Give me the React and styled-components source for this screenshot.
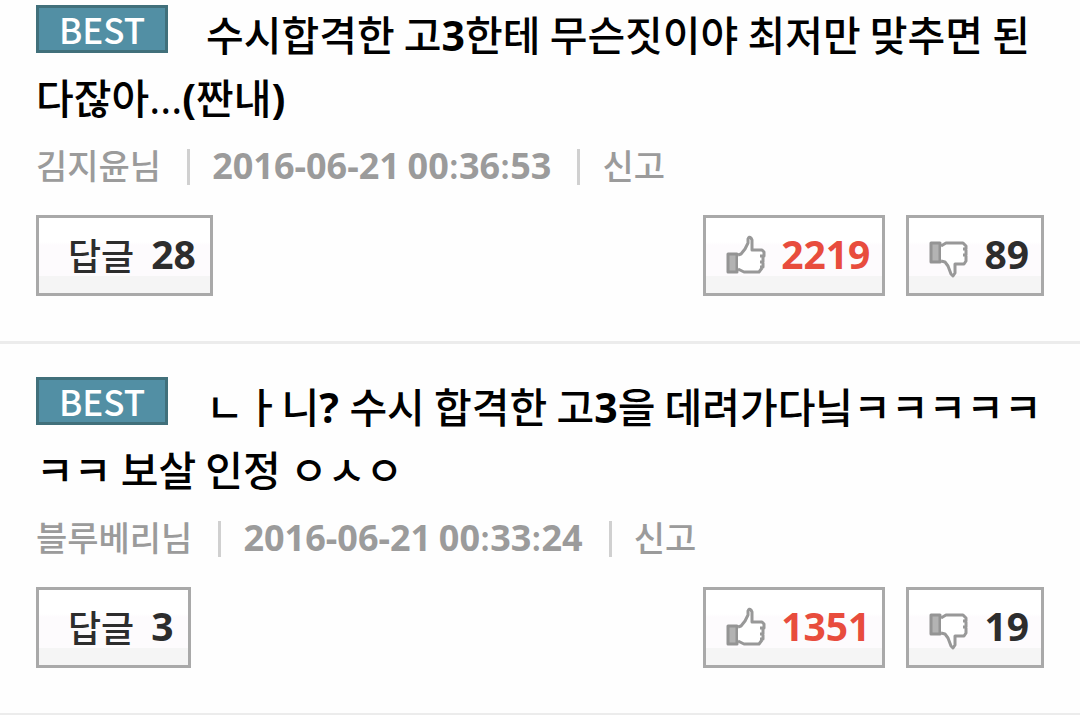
import React from 'react';
import styled, { createGlobalStyle } from 'styled-components';

const GlobalStyle = createGlobalStyle`
  body {
    margin: 0;
    background: #fefefe;
    overflow: hidden;
    font-family: "Noto Sans CJK KR", sans-serif;
    font-weight: 500;
  }
`;

const CommentList = styled.main`
  display: flex;
  flex-direction: column;
`;

const Comment = styled.article`
  display: flex;
  flex-direction: column;
  padding: 30px 36px 45px;
  border-bottom: 3px solid #ececec;

  &:first-child {
    padding-top: 2px;
  }
`;

const Title = styled.h2`
  margin: 0;
  font-size: 41px;
  line-height: 63px;
  font-weight: 500;
  color: #000;
  word-break: break-all;
`;

const Badge = styled.span`
  display: inline-flex;
  align-items: center;
  justify-content: center;
  box-sizing: border-box;
  width: 132px;
  height: 48px;
  margin-right: 38px;
  border: 3px solid #41707b;
  background: #528fa4;
  color: #fff;
  font-size: 35px;
  line-height: 42px;
  vertical-align: 7px;
`;

const Strong = styled.b`
  font-family: "Noto Sans", "Noto Sans CJK KR", sans-serif;
  font-weight: 700;
  line-height: 1;
`;

const Dots = styled.span`
  font-family: "Noto Sans", "Noto Sans CJK KR", sans-serif;
  font-weight: 400;
  line-height: 1;
`;

const Meta = styled.div`
  display: flex;
  align-items: center;
  height: 74px;
  font-size: 34px;
  line-height: 36px;
  color: #9b9b9b;

  ${Strong} {
    font-size: 36px;
  }
`;

const Separator = styled.span`
  width: 3px;
  height: 36px;
  margin: 4px 22px 0 26px;
  background: #d0d0d0;
`;

const ReportLink = styled.a`
  color: inherit;
  text-decoration: none;
`;

const Actions = styled.div`
  display: flex;
  gap: 21px;
  margin-top: 13px;
`;

const Button = styled.button`
  display: flex;
  align-items: center;
  gap: 15px;
  box-sizing: border-box;
  height: 81px;
  margin: 0;
  padding: 0 12px 4px 20px;
  border: 3px solid #a9a9a9;
  background: linear-gradient(#fff 32%, #fdfbfd 36%, #fdfbfd 77%, #f5f5f5 78%);
  color: ${(p) => (p.$liked ? '#e84c3d' : '#2d2d2d')};
  font: inherit;
  font-size: 40px;
`;

const ReplyButton = styled(Button)`
  gap: 17px;
  margin-right: auto;
  padding: 0 14px 4px 29px;
  font-size: 36px;
`;

const Count = styled(Strong)`
  font-size: 39px;
`;

const Icon = styled.svg`
  display: block;
  width: 40px;
  height: 44px;
  margin-top: 4px;
`;

const ThumbUp = () => (
  <Icon viewBox="0 0 40 44" aria-hidden="true" fill="none" strokeLinejoin="round">
    <path d="M2 20H11V38H2Z" fill="#b3b3b3" stroke="#949494" strokeWidth="3" />
    <path
      d="M12 21L18 16L22 9V5Q23 2 25 4L26 6V16H36L38 18V22L37 34L33 38H18L12 35Z"
      fill="#fff"
    />
    <path
      d="M12 21L15 20L19 15L22 9V5Q23 2 25 4L26 6V16H36L38 18V22H34M37 23V28H34M37 29V33H34M36 34L33 38H18L12 35"
      stroke="#989898" strokeWidth="3"
    />
  </Icon>
);

const ThumbDown = () => (
  <Icon viewBox="0 0 40 44" aria-hidden="true" fill="none" strokeLinejoin="round">
    <path d="M2 9H11V28H2Z" fill="#b3b3b3" stroke="#949494" strokeWidth="3" />
    <path
      d="M12 12L17 9H34L38 12V27L35 30H26V39L24 42L22 40L18 31L12 27Z"
      fill="#fff"
    />
    <path
      d="M12 12L17 9H34L37 12V15H34M37 16V21H34M37 22V27L35 30H26V39L24 42L22 40L19 32L16 28L12 27"
      stroke="#989898" strokeWidth="3"
    />
  </Icon>
);

/* Digits, brackets and question marks use the bold Latin face, dots the regular one. */
const renderText = (text) =>
  text.split(/(\? |[0-9?()-]+|\.+)/).map((part, i) => {
    if (i % 2 === 0) return part;
    return part[0] === '.' ? <Dots key={i}>{part}</Dots> : <Strong key={i}>{part}</Strong>;
  });

const comments = [
  {
    id: 1,
    text: '수시합격한 고3한테 무슨짓이야 최저만 맞추면 된다잖아...(짠내)',
    author: '김지윤님',
    date: '2016-06-21 00:36:53',
    replies: 28,
    likes: 2219,
    dislikes: 89,
  },
  {
    id: 2,
    text: 'ㄴㅏ니? 수시 합격한 고3을 데려가다닠ㅋㅋㅋㅋㅋㅋㅋ 보살 인정 ㅇㅅㅇ',
    author: '블루베리님',
    date: '2016-06-21 00:33:24',
    replies: 3,
    likes: 1351,
    dislikes: 19,
  },
];

export default function App() {
  return (
    <>
      <GlobalStyle />
      <CommentList>
        {comments.map((c) => (
          <Comment key={c.id}>
            <Title>
              <Badge>BEST</Badge>
              {renderText(c.text)}
            </Title>
            <Meta>
              <span>{c.author}</span>
              <Separator />
              <time>{renderText(c.date)}</time>
              <Separator />
              <ReportLink href="#report">신고</ReportLink>
            </Meta>
            <Actions>
              <ReplyButton type="button">
                답글 <Count>{c.replies}</Count>
              </ReplyButton>
              <Button type="button" $liked>
                <ThumbUp />
                <Count>{c.likes}</Count>
              </Button>
              <Button type="button">
                <ThumbDown />
                <Count>{c.dislikes}</Count>
              </Button>
            </Actions>
          </Comment>
        ))}
      </CommentList>
    </>
  );
}
